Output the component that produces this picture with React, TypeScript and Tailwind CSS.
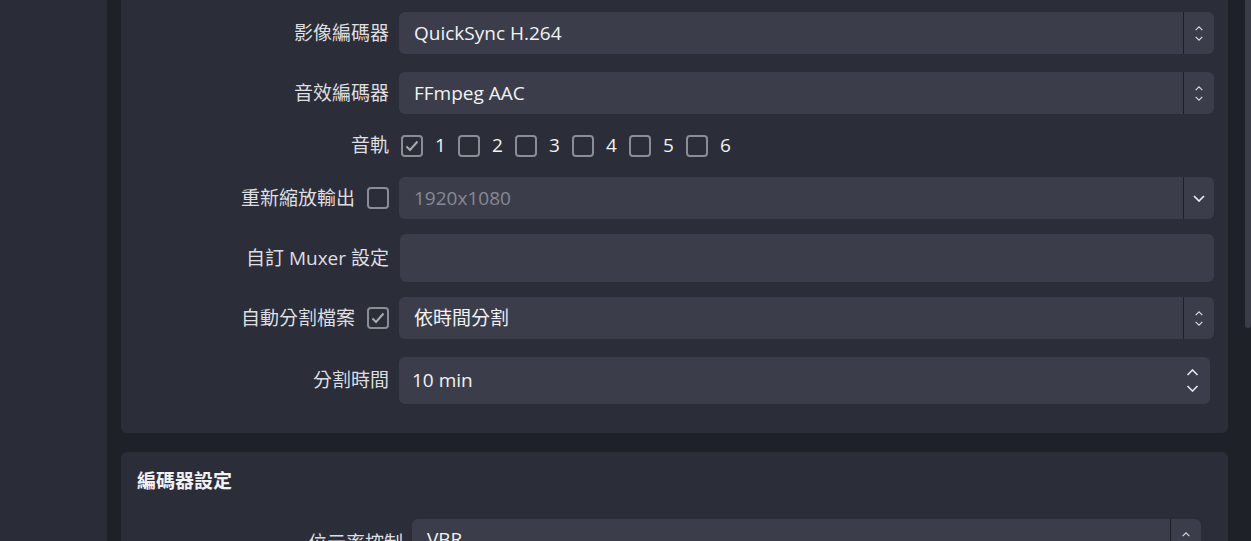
import type { ReactNode } from "react";

const FONT = "font-['Open_Sans','Noto_Sans_CJK_TC',sans-serif]";

function UpDown({ big }: { big?: boolean }) {
  if (big) {
    return (
      <div className="flex flex-col items-center gap-[9px]">
        <svg viewBox="0 0 12 7" className="h-[7px] w-[13px]" fill="none" stroke="#e6e7ea" strokeWidth="1.6">
          <path d="M1 6 6 1l5 5" />
        </svg>
        <svg viewBox="0 0 12 7" className="h-[7px] w-[13px]" fill="none" stroke="#e6e7ea" strokeWidth="1.6">
          <path d="M1 1l5 5 5-5" />
        </svg>
      </div>
    );
  }
  return (
    <div className="flex flex-col items-center gap-[5px]">
      <svg viewBox="0 0 10 6" className="h-[5px] w-[10px]" fill="none" stroke="#d9dadf" strokeWidth="1.4">
        <path d="M1 5 5 1l4 4" />
      </svg>
      <svg viewBox="0 0 10 6" className="h-[5px] w-[10px]" fill="none" stroke="#d9dadf" strokeWidth="1.4">
        <path d="M1 1l4 4 4-4" />
      </svg>
    </div>
  );
}

function Down() {
  return (
    <svg viewBox="0 0 12 7" className="h-[7px] w-[12px]" fill="none" stroke="#eceef1" strokeWidth="1.7">
      <path d="M1 1l5 5 5-5" />
    </svg>
  );
}

function Combo({
  value,
  muted,
  single,
}: {
  value: string;
  muted?: boolean;
  single?: boolean;
}) {
  return (
    <div className="flex h-[42px] flex-1 overflow-hidden rounded-[6px] bg-[#3b3e4a]">
      <div
        className={`flex flex-1 items-center border-r border-[#1d1f26] pl-[15px] text-[19px] ${
          muted ? "text-[#868993]" : "text-[#f1f2f4]"
        }`}
      >
        {value}
      </div>
      <div className="flex w-[30px] items-center justify-center">
        {single ? <Down /> : <UpDown />}
      </div>
    </div>
  );
}

function Check({ on }: { on?: boolean }) {
  return (
    <div className="flex h-[22px] w-[22px] shrink-0 items-center justify-center rounded-[4px] border-2 border-[#8b8d95]">
      {on && (
        <svg viewBox="0 0 14 12" className="h-[12px] w-[14px]" fill="none" stroke="#a9abb2" strokeWidth="2">
          <path d="M1.5 6.5 5 10l7.5-8.5" />
        </svg>
      )}
    </div>
  );
}

function Row({
  label,
  check,
  checked,
  className,
  children,
}: {
  label: string;
  check?: boolean;
  checked?: boolean;
  className?: string;
  children: ReactNode;
}) {
  return (
    <div className={`flex items-center ${className ?? ""}`}>
      <div className="flex w-[268px] shrink-0 items-center justify-end gap-[12px] text-[19px] text-[#dedfe2]">
        <span>{label}</span>
        {check && <Check on={checked} />}
      </div>
      <div className="ml-[10px] flex flex-1 items-center">{children}</div>
    </div>
  );
}

export default function App() {
  const tracks = [1, 2, 3, 4, 5, 6];
  return (
    <div className={`flex h-[541px] w-[1251px] overflow-hidden bg-[#1f2129] ${FONT}`}>
      <div className="w-[107px] shrink-0 bg-[#2a2c37]" />
      <div className="ml-[14px] flex w-[1107px] shrink-0 flex-col gap-[19px]">
        <div className="rounded-b-[6px] bg-[#2b2d38] pb-[29px] pr-[14px] pt-[12px]">
          <Row label="影像編碼器">
            <Combo value="QuickSync H.264" />
          </Row>
          <Row label="音效編碼器" className="mt-[18px]">
            <Combo value="FFmpeg AAC" />
          </Row>
          <Row label="音軌" className="mt-[18px] h-[27px]">
            <div className="flex items-center">
              {tracks.map((t) => (
                <div key={t} className="flex w-[57px] items-center gap-[12px] pl-[2px]">
                  <Check on={t === 1} />
                  <span className="text-[19px] text-[#f1f2f4]">{t}</span>
                </div>
              ))}
            </div>
          </Row>
          <Row label="重新縮放輸出" check className="mt-[18px]">
            <Combo value="1920x1080" muted single />
          </Row>
          <Row label="自訂 Muxer 設定" className="mt-[15px]">
            <div className="ml-[1px] h-[48px] flex-1 rounded-[6px] bg-[#3b3e4a]" />
          </Row>
          <Row label="自動分割檔案" check checked className="mt-[15px]">
            <Combo value="依時間分割" />
          </Row>
          <Row label="分割時間" className="mt-[18px]">
            <div className="mr-[4px] flex h-[47px] flex-1 items-center rounded-[6px] bg-[#3b3e4a] pl-[13px] pr-[11px]">
              <span className="flex-1 text-[19px] text-[#f1f2f4]">10 min</span>
              <UpDown big />
            </div>
          </Row>
        </div>
        <div className="flex-1 rounded-t-[6px] bg-[#2b2d38] pr-[27px] pt-[15px]">
          <div className="pl-[16px] text-[19px] font-semibold text-[#f1f2f4]">編碼器設定</div>
          <div className="mt-[23px] flex items-start">
            <div className="flex w-[282px] shrink-0 justify-end pt-[10px] text-[19px] text-[#dedfe2]">
              位元率控制
            </div>
            <div className="ml-[9px] flex h-[42px] flex-1 overflow-hidden rounded-[6px] bg-[#3b3e4a]">
              <div className="flex flex-1 items-center border-r border-[#1d1f26] pl-[15px] text-[19px] text-[#f1f2f4]">
                VBR
              </div>
              <div className="flex w-[30px] items-center justify-center">
                <UpDown />
              </div>
            </div>
          </div>
        </div>
      </div>
      <div className="ml-[17px] flex w-[6px] shrink-0 flex-col">
        <div className="h-[328px] rounded-b-[3px] bg-[#3a3d48]" />
      </div>
    </div>
  );
}
